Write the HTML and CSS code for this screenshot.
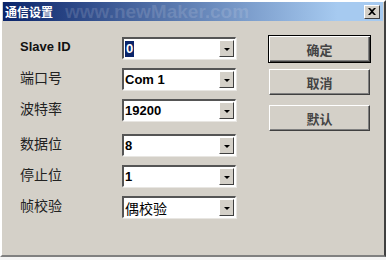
FILE: index.html
```html
<!DOCTYPE html>
<html lang="zh-CN">
<head>
    <meta charset="UTF-8">
    <title>通信设置</title>
    <link rel="stylesheet" href="styles.css">
</head>
<body>
    <div class="window">
        <!-- title bar -->
        <div class="titlebar">
            <span class="title">通信设置</span>
            <span class="watermark">www.newMaker.com</span>
            <span class="close">
                <svg width="8" height="7" viewBox="0 0 8 7"><path d="M0 0h2l2 2 2-2h2L5 3.5 8 7H6L4 5 2 7H0l3-3.5z" fill="#000"/></svg>
            </span>
        </div>

        <div class="content">
            <div class="fields">
                <div class="row">
                    <span class="label latin">Slave ID</span>
                    <div class="combo"><span class="value"><span class="selected">0</span></span><span class="drop"></span></div>
                </div>
                <div class="row">
                    <span class="label">端口号</span>
                    <div class="combo"><span class="value">Com 1</span><span class="drop"></span></div>
                </div>
                <div class="row">
                    <span class="label">波特率</span>
                    <div class="combo"><span class="value">19200</span><span class="drop"></span></div>
                </div>
                <div class="row spaced">
                    <span class="label">数据位</span>
                    <div class="combo"><span class="value">8</span><span class="drop"></span></div>
                </div>
                <div class="row">
                    <span class="label">停止位</span>
                    <div class="combo"><span class="value">1</span><span class="drop"></span></div>
                </div>
                <div class="row">
                    <span class="label">帧校验</span>
                    <div class="combo"><span class="value cjk">偶校验</span><span class="drop"></span></div>
                </div>
            </div>

            <div class="actions">
                <button class="btn default">确定</button>
                <button class="btn">取消</button>
                <button class="btn">默认</button>
            </div>
        </div>
    </div>
</body>
</html>
```

FILE: styles.css
```css
/* General styling */
html, body {
    margin: 0;
    padding: 0;
    background: #f4f4f4;
}

body {
    font-family: "Liberation Sans", "Noto Sans CJK SC", sans-serif;
    font-size: 13px;
    color: #000;
}

/* Window frame */
.window {
    position: relative;
    width: 386px;
    height: 257px;
    box-sizing: border-box;
    background: #d4d0c8;
    border-top: 2px solid #ffffff;
    border-left: 2px solid #ffffff;
    border-right: 2px solid #404040;
    border-bottom: 2px solid #808080;
    padding: 0 1px;
}

.titlebar {
    position: relative;
    height: 19px;
    display: flex;
    align-items: center;
    background: linear-gradient(to right, #0a246a, #a6caf0 88%, #a6caf0);
    padding: 0 3px 0 2px;
}

.title {
    color: #fff;
    font-weight: bold;
    font-size: 12px;
    font-family: "Noto Sans CJK SC", sans-serif;
}

/* faint watermark over the caption */
.watermark {
    position: absolute;
    left: 62px;
    top: -1px;
    font-size: 19px;
    font-weight: bold;
    color: rgba(230, 230, 240, 0.16);
    font-family: "Liberation Sans", sans-serif;
}

.close {
    margin-left: auto;
    width: 16px;
    height: 14px;
    box-sizing: border-box;
    background: #d4d0c8;
    border-top: 1px solid #fff;
    border-left: 1px solid #fff;
    border-right: 1px solid #404040;
    border-bottom: 1px solid #404040;
    display: flex;
    align-items: center;
    justify-content: center;
}

/* Dialog body */
.content {
    display: flex;
    padding: 16px 0 0 17px;
}

.fields {
    display: flex;
    flex-direction: column;
    gap: 9px;
}

.row {
    display: flex;
    align-items: center;
    height: 22px;
}

.row.spaced {
    margin-top: 4px;
}

.label {
    width: 102px;
    font-family: "Noto Sans CJK SC", sans-serif;
    font-size: 14px;
    color: #222;
    margin-top: -4px;
}

.label.latin {
    font-family: "Liberation Sans", sans-serif;
    font-weight: bold;
    font-size: 13px;
    color: #111;
}

/* Combo box */
.combo {
    width: 114px;
    height: 22px;
    box-sizing: border-box;
    display: flex;
    background: #fff;
    border-top: 2px solid #555;
    border-left: 2px solid #555;
    border-right: 1px solid #fff;
    border-bottom: 1px solid #fff;
    box-shadow: 1px 1px 0 #e8e6e2;
}

.value {
    flex: 1;
    display: flex;
    align-items: center;
    padding-left: 1px;
    font-weight: bold;
    font-size: 13px;
}

.value.cjk {
    font-weight: normal;
    font-family: "Noto Sans CJK SC", sans-serif;
    font-size: 14px;
}

.selected {
    background: #0a246a;
    color: #fff;
    padding: 0 1px;
    line-height: 16px;
}

.drop {
    width: 15px;
    margin: 1px 1px 1px 0;
    box-sizing: border-box;
    background: #d4d0c8;
    border-top: 1px solid #fff;
    border-left: 1px solid #fff;
    border-right: 1px solid #404040;
    border-bottom: 1px solid #404040;
    display: flex;
    align-items: center;
    justify-content: center;
}

.drop::after {
    content: "";
    border-left: 3px solid transparent;
    border-right: 3px solid transparent;
    border-top: 3px solid #000;
    margin-top: 1px;
}

/* Buttons */
.actions {
    display: flex;
    flex-direction: column;
    margin-left: 32px;
    margin-top: -2px;
}

.btn {
    width: 101px;
    height: 26px;
    margin: 0 0 10px 1px;
    padding: 0;
    background: #d4d0c8;
    border-top: 1px solid #fff;
    border-left: 1px solid #fff;
    border-right: 1px solid #404040;
    border-bottom: 1px solid #404040;
    box-shadow: inset -1px -1px 0 #808080;
    font-family: "Noto Sans CJK SC", sans-serif;
    font-weight: bold;
    font-size: 13px;
    color: #444;
}

.btn.default {
    width: 103px;
    height: 28px;
    margin: 0 0 6px 0;
    border: 1px solid #000;
    box-shadow: inset 1px 1px 0 #fff, inset -1px -1px 0 #404040, inset -2px -2px 0 #808080;
}
```
